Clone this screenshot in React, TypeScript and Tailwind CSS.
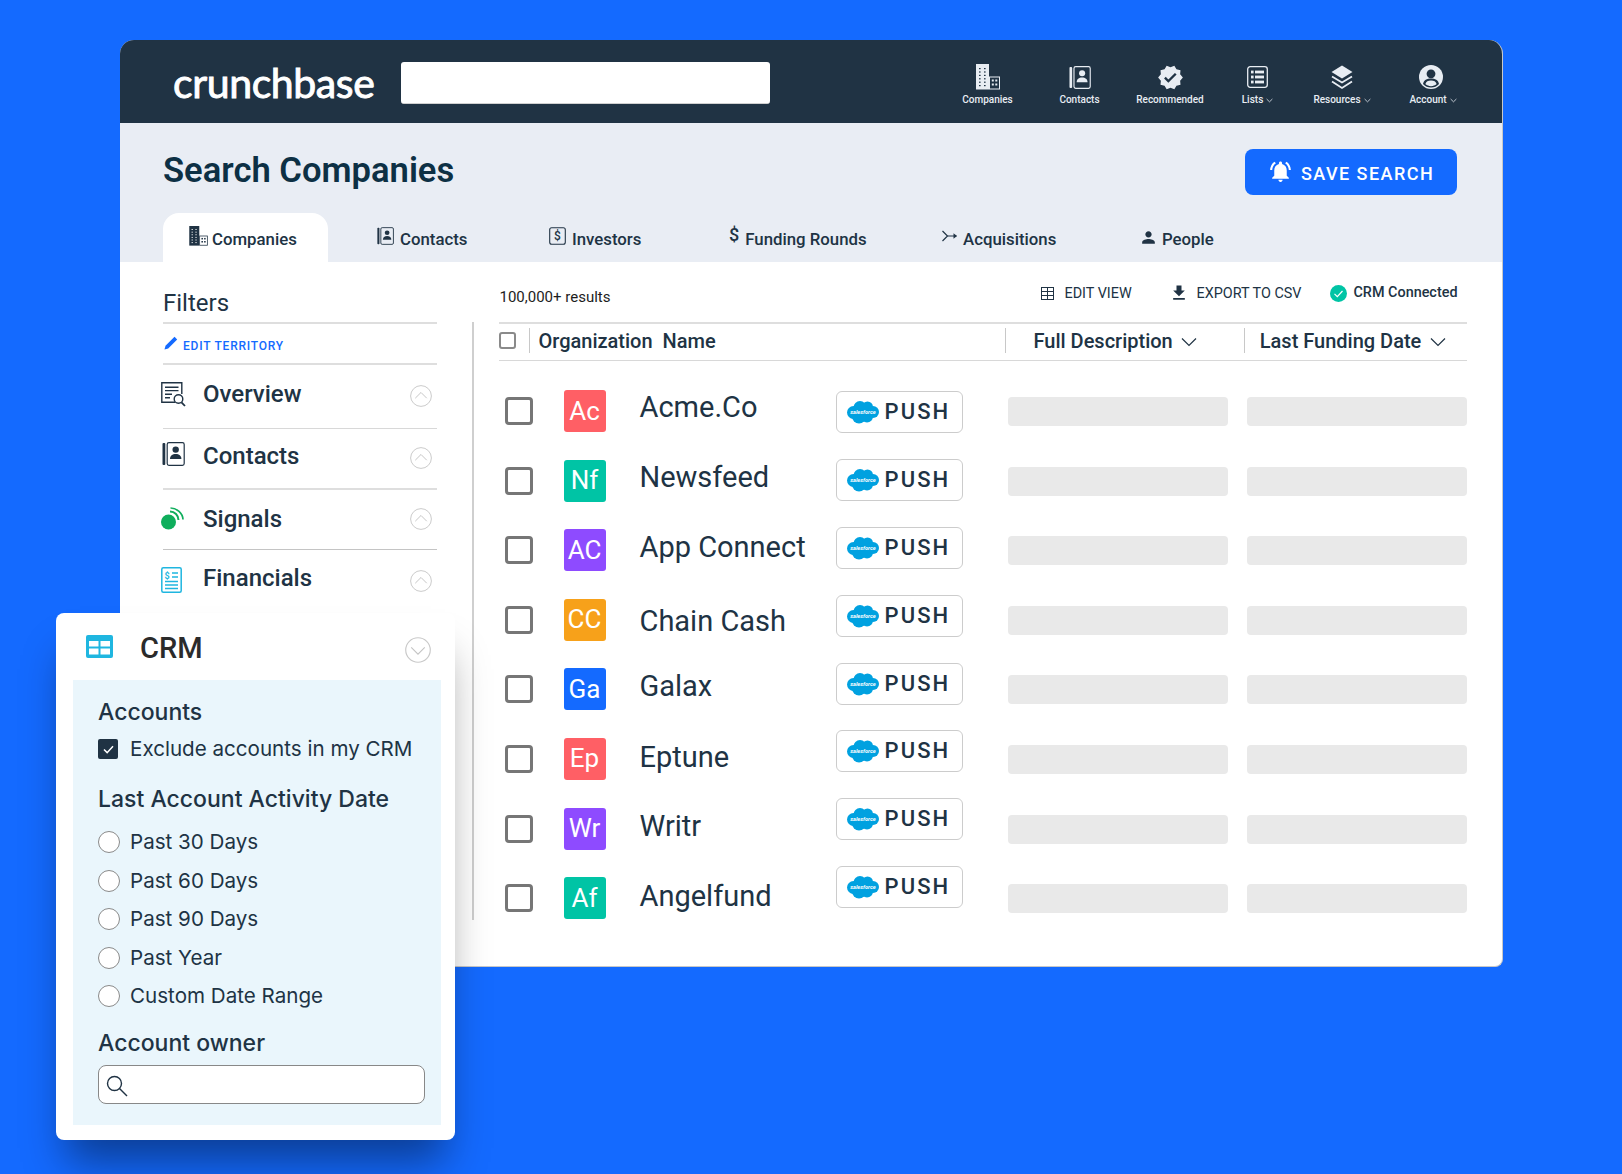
import React from "react";
import { MdVerified, MdNotificationsActive, MdFileDownload, MdPerson } from "react-icons/md";

const roboto = "font-['Roboto',sans-serif]";

function Cloud() {
  return (
    <svg viewBox="0 0 32 23" className="w-[32px] h-[24px] shrink-0">
      <g fill="#00a1e0">
        <circle cx="13" cy="7" r="6.500" />
        <circle cx="20.5" cy="6.5" r="5.500" />
        <circle cx="26" cy="11.5" r="6" />
        <circle cx="6.5" cy="12" r="6.500" />
        <circle cx="12" cy="16" r="7" />
        <circle cx="20" cy="16" r="6" />
      </g>
      <text x="16" y="13" textAnchor="middle" fontSize="5.6" fontStyle="italic" fontWeight="700" fill="#fff" fontFamily="Roboto, sans-serif">salesforce</text>
    </svg>
  );
}

function ChevronCircle({ down, big, className }: { down?: boolean; big?: boolean; className?: string }) {
  return (
    <svg viewBox="0 0 25 25" className={(big ? "w-[26px] h-[26px] " : "w-[22px] h-[22px] ") + (className ?? "")} fill="none">
      <circle cx="12.5" cy="12.5" r="11.8" stroke="#c9c9c9" strokeWidth="1.1" />
      {down ? <path d="M6 10l6.5 6.5L19 10" stroke="#c4c4c4" strokeWidth="1.1" /> : <path d="M6 15l6.5-6.5L19 15" stroke="#c4c4c4" strokeWidth="1.1" />}
    </svg>
  );
}

function Chevron({ className }: { className?: string }) {
  return (
    <svg viewBox="0 0 16 10" className={className} fill="none">
      <path d="M1 1.5l7 7 7-7" stroke="#203344" strokeWidth="1.2" />
    </svg>
  );
}

function TinyChevron() {
  return (
    <svg viewBox="0 0 8 5" className="w-[7px] h-[5px] ml-[3px] mt-[1px]" fill="none">
      <path d="M0.7 0.8L4 4l3.3-3.2" stroke="#e8edf3" strokeWidth="0.9" />
    </svg>
  );
}

function Building({ fg, bg, className }: { fg: string; bg: string; className?: string }) {
  const dots: React.ReactNode[] = [];
  for (let r = 0; r < 6; r++) {
    dots.push(<rect key={"a" + r} x="3" y={4 + r * 3.4} width="1.6" height="1.2" fill={bg} />);
    dots.push(<rect key={"b" + r} x="8" y={4 + r * 3.4} width="1.6" height="1.2" fill={bg} />);
  }
  return (
    <svg viewBox="0 0 24 26" className={className}>
      <rect x="0" y="0" width="13" height="25.5" fill={fg} />
      {dots}
      <rect x="13.5" y="13" width="10" height="12" fill={bg} stroke={fg} strokeWidth="1" />
      <rect x="15.8" y="15.5" width="2" height="2" fill={fg} />
      <rect x="19.3" y="15.5" width="2" height="2" fill={fg} />
      <rect x="15.8" y="19.5" width="2" height="2" fill={fg} />
      <rect x="19.3" y="19.5" width="2" height="2" fill={fg} />
    </svg>
  );
}

function ContactBook({ color, className }: { color: string; className?: string }) {
  return (
    <svg viewBox="0 0 23 24" className={className} fill="none">
      <rect x="0.5" y="1" width="2.8" height="22" rx="1" fill={color} />
      <rect x="5.2" y="0.7" width="17" height="22.6" rx="1.8" stroke={color} strokeWidth="1.2" />
      <circle cx="13.7" cy="7.6" r="3.2" fill={color} />
      <path d="M8 17c0-3.4 2.4-5 5.7-5s5.7 1.6 5.7 5z" fill={color} />
    </svg>
  );
}

function HeaderItem({ label, chevron, icon, className }: { label: string; chevron?: boolean; icon: React.ReactNode; className: string }) {
  return (
    <div className={"flex flex-col items-center " + className}>
      <div className="h-[26px] flex items-center justify-center">{icon}</div>
      <div className={"flex items-center mt-[3px] text-[10px] leading-[14px] font-medium text-[#e8edf3] whitespace-nowrap " + roboto}>
        {label}
        {chevron && <TinyChevron />}
      </div>
    </div>
  );
}

function Tab({ icon, label, className }: { icon: React.ReactNode; label: string; className: string }) {
  return (
    <div className={"flex items-center h-[49px] text-[16.8px] font-medium text-[#203344] whitespace-nowrap " + roboto + " " + className}>
      {icon}
      <span className="mt-[5px]">{label}</span>
    </div>
  );
}

const rows = [
  { abbr: "Ac", name: "Acme.Co", color: "bg-[#ff5f65]", h: "h-[70px]" },
  { abbr: "Nf", name: "Newsfeed", color: "bg-[#00c4a5]", h: "h-[69.5px]" },
  { abbr: "AC", name: "App Connect", color: "bg-[#8e4bff]", h: "h-[74.5px]" },
  { abbr: "CC", name: "Chain Cash", color: "bg-[#f7a11a]", h: "h-[65px]" },
  { abbr: "Ga", name: "Galax", color: "bg-[#146aff]", h: "h-[70.5px]" },
  { abbr: "Ep", name: "Eptune", color: "bg-[#ff5f65]", h: "h-[69.5px]" },
  { abbr: "Wr", name: "Writr", color: "bg-[#8e4bff]", h: "h-[70px]" },
  { abbr: "Af", name: "Angelfund", color: "bg-[#00c4a5]", h: "h-[40px]" },
];

function Radio({ label }: { label: string }) {
  return (
    <div className="flex items-center h-[38.5px]">
      <span className="w-[22px] h-[22px] rounded-full bg-white border border-[#8a8a8a] shrink-0" />
      <span className="ml-[10px] text-[20.6px] leading-[28px] text-[#203344]">{label}</span>
    </div>
  );
}

export default function App() {
  return (
    <div className="relative w-[1622px] h-[1174px] overflow-hidden bg-[#146aff] pt-[40px] pl-[120px]">
      <div className="w-[1383px] h-[927px] rounded-t-[14px] rounded-b-[8px] bg-white overflow-hidden flex flex-col border-r border-b border-[#c8c8c8]">
        {/* Header */}
        <div className="h-[83px] shrink-0 bg-[#203344] flex items-center pl-[53px]">
          <div className="w-[228px] text-[41px] leading-[50px] font-['Lato',sans-serif] text-white tracking-[-0.4px] [-webkit-text-stroke:0.9px_white] mt-[2px]">crunchbase</div>
          <div className="w-[369px] h-[42px] bg-white rounded-[3px] border-b border-[#d0d0d0] mt-[2px]" />
          <div className="ml-[192px] flex items-start mt-[9px] h-[44px]">
            <HeaderItem className="w-[51px]" label="Companies" icon={<Building fg="#e8edf3" bg="#203344" className="w-[24px] h-[26px]" />} />
            <HeaderItem className="w-[41px] ml-[46px]" label="Contacts" icon={<ContactBook color="#e8edf3" className="w-[22px] h-[23px]" />} />
            <HeaderItem className="w-[68px] ml-[36px]" label="Recommended" icon={<MdVerified className="w-[27px] h-[27px] text-[#e8edf3]" />} />
            <HeaderItem className="w-[31px] ml-[38px]" label="Lists" chevron icon={
              <svg viewBox="0 0 21 22" className="w-[21px] h-[22px]" fill="none">
                <rect x="0.7" y="0.7" width="19.6" height="20.6" rx="2.5" stroke="#e8edf3" strokeWidth="1.3" />
                <g fill="#e8edf3">
                  <rect x="4" y="4.6" width="2.6" height="2.8" /><rect x="8" y="4.6" width="9" height="2.8" />
                  <rect x="4" y="9.6" width="2.6" height="2.8" /><rect x="8" y="9.6" width="9" height="2.8" />
                  <rect x="4" y="14.6" width="2.6" height="2.8" /><rect x="8" y="14.6" width="9" height="2.8" />
                </g>
              </svg>
            } />
            <HeaderItem className="w-[58px] ml-[40px]" label="Resources" chevron icon={
              <svg viewBox="0 0 22 25" className="w-[22px] h-[25px]" fill="none">
                <path d="M11 0.5L21.5 7 11 13.5 0.5 7z" fill="#e8edf3" />
                <path d="M1 11.5L11 17.5 21 11.5" stroke="#e8edf3" strokeWidth="1.8" />
                <path d="M1 16.5L11 23 21 16.5" stroke="#e8edf3" strokeWidth="1.8" />
              </svg>
            } />
            <HeaderItem className="w-[48px] ml-[38px]" label="Account" chevron icon={
              <svg viewBox="0 0 24 24" className="w-[24px] h-[24px] mr-[4px]">
                <circle cx="12" cy="12" r="12" fill="#e8edf3" />
                <circle cx="12" cy="8.8" r="4.4" fill="#203344" />
                <path d="M4 19c0.6-4 4-5.6 8-5.6s7.4 1.6 8 5.6c-2 2.4-5 3.6-8 3.6S6 21.400 4 19z" fill="#203344" />
                <path d="M6.400 19c0.5-2.500 2.800-3.600 5.600-3.600s5.100 1.100 5.600 3.600c-1.500 1.400-3.500 2.200-5.600 2.200s-4.100-0.800-5.600-2.200z" fill="#e8edf3" />
              </svg>
            } />
          </div>
        </div>

        {/* Title band */}
        <div className="h-[139px] shrink-0 bg-[#e9edf4] flex flex-col pl-[43px]">
          <div className="h-[90px] flex">
            <h1 className={"pt-[25px] text-[34.6px] leading-[44px] font-semibold text-[#0d3044] " + roboto}>Search Companies</h1>
            <div className={"ml-auto mr-[45px] mt-[26px] h-[46px] w-[212px] rounded-[8px] bg-[#146aff] flex items-center pl-[24px] text-white text-[18px] font-medium tracking-[1.45px] " + roboto}>
              <MdNotificationsActive className="w-[25px] h-[25px] mr-[8px] mb-[2px] -ml-[1px]" />
              <span className="whitespace-nowrap mt-[2px]">SAVE SEARCH</span>
            </div>
          </div>
          <div className="flex h-[49px]">
            <Tab className="w-[165px] pl-[26px] bg-white rounded-t-[16px]" label="Companies" icon={<Building fg="#203344" bg="#ffffff" className="w-[19px] h-[20px] mr-[4px] mb-[3px]" />} />
            <Tab className="ml-[49px] w-[172px]" label="Contacts" icon={<ContactBook color="#203344" className="w-[17px] h-[18px] mr-[6px] mb-[3px]" />} />
            <Tab className="w-[180px]" label="Investors" icon={
              <svg viewBox="0 0 17 18" className="w-[17px] h-[18px] mr-[6px] mb-[3px]" fill="none">
                <rect x="0.7" y="0.7" width="15.6" height="16.6" rx="2" stroke="#203344" strokeWidth="1.1" />
                <text x="8.500" y="13.200" textAnchor="middle" fontSize="12" fontFamily="Roboto, sans-serif" fill="#203344">$</text>
              </svg>
            } />
            <Tab className="w-[213px]" label="Funding Rounds" icon={<span className="text-[18px] leading-[20px] mr-[6px] mb-[5px]">$</span>} />
            <Tab className="w-[199px]" label="Acquisitions" icon={
              <svg viewBox="0 0 16 12" className="w-[16px] h-[12px] mr-[5px] mb-[4px]" fill="none" stroke="#203344" strokeWidth="1.2">
                <path d="M0.500 1L5.500 6 0.500 11" />
                <path d="M5.500 6H14.500" />
                <path d="M11.500 3.200L15 6 11.500 8.800" fill="#203344" stroke="none" />
              </svg>
            } />
            <Tab className="" label="People" icon={<MdPerson className="w-[19px] h-[19px] mr-[4px] mb-[1px] -ml-[2px]" />} />
          </div>
        </div>

        {/* Body */}
        <div className="flex pl-[43px] flex-1">
          <aside className="w-[274px] shrink-0 text-[#203344]">
            <div className={"h-[60px] pt-[27px] text-[24px] leading-[28px] " + roboto}>Filters</div>
            <div className="h-[2px] bg-[#dedede]" />
            <div className="h-[39px] flex items-center pl-[1px]">
              <svg viewBox="0 0 14 14" className="w-[14px] h-[14px] mb-[1px]">
                <path d="M0.500 13.500L1.500 9.800 10.500 0.800 13.200 3.500 4.200 12.500z" fill="#146aff" />
              </svg>
              <span className={"ml-[5px] text-[12px] font-medium text-[#146aff] tracking-[0.78px] mt-[4px] " + roboto}>EDIT TERRITORY</span>
            </div>
            <div className="h-[2px] bg-[#dedede]" />

            <div className={"h-[64px] pb-[6px] flex items-center border-b-[1.5px] border-[#d8d8d8] " + roboto}>
              <svg viewBox="0 0 25 25" className="w-[25px] h-[25px] -ml-[2px] mr-[17px] mt-[2px]" fill="none" stroke="#203344" strokeWidth="1.400">
                <path d="M14 20.300H0.800V0.800h20V12" />
                <path d="M4 5.200h13.500M4 8.600h13.500M4 12.200h7M4 15.800h5" />
                <circle cx="17.500" cy="17" r="4.300" />
                <path d="M20.500 20.300L24 24" strokeWidth="1.800" />
              </svg>
              <span className="text-[24px] leading-[28px] font-medium flex-1">Overview</span>
              <ChevronCircle className="mr-[5px] mt-[4px]" />
            </div>
            <div className={"h-[61px] pb-[6px] flex items-center border-b-2 border-[#dedede] " + roboto}>
              <ContactBook color="#203344" className="w-[23px] h-[24px] -ml-[1px] mr-[18px] mb-[4px]" />
              <span className="text-[24px] leading-[28px] font-medium flex-1">Contacts</span>
              <ChevronCircle className="mr-[5px] mt-[5px]" />
            </div>
            <div className={"h-[60px] pb-[2px] flex items-center border-b-[1.5px] border-[#c4c4c4] " + roboto}>
              <svg viewBox="0 0 23 23" className="w-[23px] h-[23px] -ml-[2px] mr-[19px]" fill="none">
                <circle cx="7.500" cy="15" r="7.500" fill="#0fae5c" />
                <path d="M9 4.500c4.700 0 8.500 3.800 8.500 8.500" stroke="#0fae5c" strokeWidth="2" />
                <path d="M9.500 1c6.300 0 12.300 5.400 12.500 11.500" stroke="#0fae5c" strokeWidth="1.700" />
              </svg>
              <span className="text-[24px] leading-[28px] font-medium flex-1">Signals</span>
              <ChevronCircle className="mr-[5px]" />
            </div>
            <div className={"h-[60px] pb-[5px] flex items-center " + roboto}>
              <svg viewBox="0 0 21 26" className="w-[21px] h-[26px] -ml-[2px] mr-[21px] mt-[5px]" fill="none" stroke="#1fb6e0" strokeWidth="1.500">
                <rect x="0.800" y="0.800" width="19.400" height="24.400" rx="1.500" />
                <path d="M11 6h6M11 10h6M4 14.500h13M4 18h13M4 21.500h13" />
                <text x="6" y="11.500" textAnchor="middle" fontSize="9" fontWeight="700" fontFamily="Roboto, sans-serif" fill="#1fb6e0" stroke="none">$</text>
              </svg>
              <span className="text-[24px] leading-[28px] font-medium flex-1">Financials</span>
              <ChevronCircle className="mr-[5px] mt-[7px]" />
            </div>
          </aside>

          <div className="ml-[35px] mt-[60px] h-[598px] w-[1.5px] shrink-0 bg-[#cfcfcf]" />

          <main className={"ml-[25px] w-[968px] shrink-0 text-[#203344] " + roboto}>
            {/* Toolbar */}
            <div className="h-[60px] flex items-start text-[14.4px]">
              <span className="mt-[25px] ml-[1px] leading-[20px] text-[15px] text-[#1d1d1d]">100,000+ results</span>
              <div className="ml-auto flex items-center h-[20px] mt-[21px] mr-[9px] uppercase">
                <svg viewBox="0 0 13 13" className="w-[13px] h-[13px]" fill="none" stroke="#203344" strokeWidth="1">
                  <rect x="0.500" y="0.500" width="12" height="12" />
                  <path d="M6.500 0.500v12M0.500 4.500h12M0.500 8.500h12" />
                </svg>
                <span className="ml-[10px] w-[108px] mt-[2px]">Edit view</span>
                <MdFileDownload className="w-[20px] h-[20px] -ml-[3px]" />
                <span className="ml-[7px] mt-[2px]">Export to CSV</span>
                <svg viewBox="0 0 17 17" className="w-[17px] h-[17px] ml-[29px]" fill="none">
                  <circle cx="8.500" cy="8.500" r="8.500" fill="#00c4a5" />
                  <path d="M4.500 8.800l2.800 2.800 5.200-5.600" stroke="#fff" strokeWidth="1.200" />
                </svg>
                <span className="ml-[6px] font-medium normal-case">CRM Connected</span>
              </div>
            </div>
            <div className="h-[2px] bg-[#dedede]" />
            {/* Table head */}
            <div className="h-[37px] pb-[3px] flex items-center border-b-[1.5px] border-[#d8d8d8]">
              <span className="w-[17px] h-[17px] rounded-[3px] border-2 border-[#8a8a8a] shrink-0" />
              <span className="ml-[13px] w-[1px] h-[25px] bg-[#c8c8c8] shrink-0" />
              <span className="ml-[9px] w-[466px] text-[20px] font-medium whitespace-pre shrink-0">Organization  Name</span>
              <span className="w-[1px] h-[25px] bg-[#c8c8c8] shrink-0" />
              <span className="ml-[28px] text-[20px] font-medium whitespace-nowrap">Full Description</span>
              <Chevron className="w-[16px] h-[10px] ml-[8px] mt-[2px]" />
              <span className="ml-[47px] w-[1px] h-[25px] bg-[#c8c8c8] shrink-0" />
              <span className="ml-[15px] text-[20px] font-medium whitespace-nowrap">Last Funding Date</span>
              <Chevron className="w-[16px] h-[10px] ml-[9px] mt-[2px]" />
            </div>
            {/* Table body */}
            <div className="flex">
              <div className="w-[65px] pl-[6px] pt-[36px] flex flex-col gap-[41.6px]">
                {rows.map((r) => (
                  <span key={r.name} className="block w-[28px] h-[28px] rounded-[4px] border-[3px] border-[#767676]" />
                ))}
              </div>
              <div className="w-[76px] pt-[29px] flex flex-col gap-[27.6px]">
                {rows.map((r) => (
                  <span key={r.name} className={"w-[42px] h-[42px] rounded-[3px] flex items-center justify-center text-white text-[26px] " + r.color}>{r.abbr}</span>
                ))}
              </div>
              <div className="w-[196px] pt-[27px] flex flex-col">
                {rows.map((r) => (
                  <div key={r.name} className={"text-[29px] leading-[38px] whitespace-nowrap " + r.h}>{r.name}</div>
                ))}
              </div>
              <div className="w-[172px] pt-[30px] flex flex-col gap-[25.9px]">
                {rows.map((r) => (
                  <div key={r.name} className="w-[127px] h-[42px] rounded-[6px] border-[1.5px] border-[#cccccc] flex items-center pl-[10px]">
                    <Cloud />
                    <span className="ml-[6px] text-[22px] font-medium leading-[26px] tracking-[2.1px]">PUSH</span>
                  </div>
                ))}
              </div>
              <div className="w-[239px] pt-[36px] flex flex-col gap-[40.6px]">
                {rows.map((r) => (
                  <div key={r.name} className="w-[220px] h-[29px] rounded-[4px] bg-[#e9e9e9]" />
                ))}
              </div>
              <div className="w-[220px] pt-[36px] flex flex-col gap-[40.6px]">
                {rows.map((r) => (
                  <div key={r.name} className="w-[220px] h-[29px] rounded-[4px] bg-[#e9e9e9]" />
                ))}
              </div>
            </div>
          </main>
        </div>
      </div>

      {/* CRM floating panel */}
      <div className="absolute left-[56px] top-[613px] w-[399px] h-[527px] bg-white rounded-[8px] shadow-[0_32px_40px_-10px_rgba(0,0,0,0.42)] px-[17px] pt-[22px] font-['Inter',sans-serif] text-[#203344]">
        <div className="h-[45px] flex items-start">
          <svg viewBox="0 0 27 23" className="w-[27px] h-[23px] ml-[13px]">
            <rect x="0" y="0" width="27" height="23" rx="2" fill="#1fb6e0" />
            <g fill="#fff">
              <rect x="3" y="6" width="9.500" height="5.500" />
              <rect x="14.500" y="6" width="9.500" height="5.500" />
              <rect x="3" y="13.500" width="9.500" height="6" />
              <rect x="14.500" y="13.500" width="9.500" height="6" />
            </g>
          </svg>
          <span className={"ml-[27px] text-[29px] leading-[30px] font-medium text-[#2b2b2b] -mt-[2px] " + roboto}>CRM</span>
          <ChevronCircle down big className="ml-auto mr-[7px] mt-[2px]" />
        </div>
        <div className="w-[368px] h-[445px] bg-[#eaf6fc] pl-[25px] pt-[17px]">
          <div className="text-[23px] leading-[30px] font-medium">Accounts</div>
          <div className="flex items-center mt-[7px] h-[30px]">
            <span className="w-[20px] h-[20px] rounded-[2px] bg-[#203344] flex items-center justify-center shrink-0">
              <svg viewBox="0 0 12 10" className="w-[11px] h-[9px]" fill="none">
                <path d="M1 5l3.500 3.500L11 1.500" stroke="#fff" strokeWidth="1.700" />
              </svg>
            </span>
            <span className="ml-[12px] text-[20.6px] leading-[28px] whitespace-nowrap">Exclude accounts in my CRM</span>
          </div>
          <div className="mt-[20px] text-[23px] leading-[30px] font-medium whitespace-nowrap">Last Account Activity Date</div>
          <div className="mt-[9px] flex flex-col">
            <Radio label="Past 30 Days" />
            <Radio label="Past 60 Days" />
            <Radio label="Past 90 Days" />
            <Radio label="Past Year" />
            <Radio label="Custom Date Range" />
          </div>
          <div className="mt-[12.5px] text-[23px] leading-[30px] font-medium">Account owner</div>
          <div className="mt-[7px] w-[327px] h-[39px] rounded-[8px] bg-white border border-[#888888] flex items-center pl-[7px]">
            <svg viewBox="0 0 22 22" className="w-[22px] h-[22px] mt-[2px]" fill="none" stroke="#203344" strokeWidth="1.400">
              <circle cx="8.500" cy="8.500" r="7" />
              <path d="M13.500 13.500L21 21" />
            </svg>
          </div>
        </div>
      </div>
    </div>
  );
}
